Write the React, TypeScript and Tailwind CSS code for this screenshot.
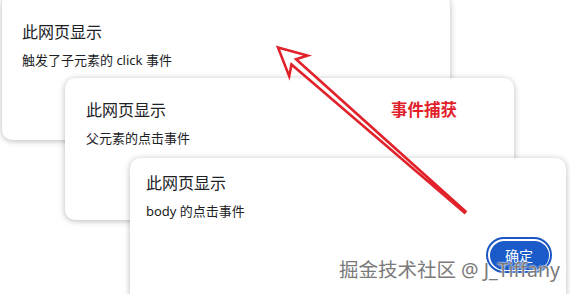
const cjk = "font-['Segoe_UI','Noto_Sans','Noto_Sans_CJK_SC',sans-serif]";

function AlertBox({ className, title, message, children }: { className: string, title: string, message: string, children?: React.ReactNode }) {
    return (
        <div className={`absolute bg-white rounded-[10px] shadow-[0_1px_6px_rgba(0,0,0,0.28)] flex flex-col ${className}`}>
            <div className="text-[16px] leading-[20px] text-[#202124]">{title}</div>
            <div className="mt-[8px] text-[13px] leading-[20px] text-[#202124]">{message}</div>
            {children}
        </div>
    )
}

export default function App() {
    return (
        <div className={`relative w-[570px] h-[294px] overflow-hidden bg-white ${cjk}`}>
            <AlertBox className="left-[2px] top-[-6px] w-[448px] h-[146px] pl-[20px] pt-[28px]" title="此网页显示" message="触发了子元素的 click 事件" />
            <AlertBox className="left-[65px] top-[78px] w-[449px] h-[142px] pl-[21px] pt-[22px]" title="此网页显示" message="父元素的点击事件" />
            <AlertBox className="left-[130px] top-[158px] w-[436px] h-[150px] pl-[16px] pr-[14px] pt-[15px]" title="此网页显示" message="body 的点击事件">
                <div className="flex justify-end mt-[16px]">
                    <div className="w-[66px] h-[36px] rounded-full border-[2px] border-[#1a56c4] bg-white p-[1.5px]">
                        <div className="w-full h-full rounded-full bg-[#1a5bc9] flex items-center justify-center text-white text-[14px]">确定</div>
                    </div>
                </div>
            </AlertBox>

            <svg className="absolute left-0 top-0" width="570" height="294" viewBox="0 0 570 294">
                <polygon
                    points="278,47.5 307.5,55.5 296.1,59.2 465.5,211.5 464.5,212.7 291.5,64.4 289.2,76.2"
                    fill="white"
                    stroke="#e1222b"
                    strokeWidth="2.6"
                    strokeLinejoin="miter"
                />
            </svg>

            <div className="absolute left-[391px] top-[100px] text-[16.5px] leading-[20px] font-bold text-[#e1222b]">事件捕获</div>

            <div className="absolute left-[339px] top-[259px] text-[19.5px] leading-[22px] text-[#7a7a7a] [text-shadow:0_0_2px_#fff,0_0_2px_#fff]">掘金技术社区 @ J_Tiffany</div>
        </div>
    )
}
